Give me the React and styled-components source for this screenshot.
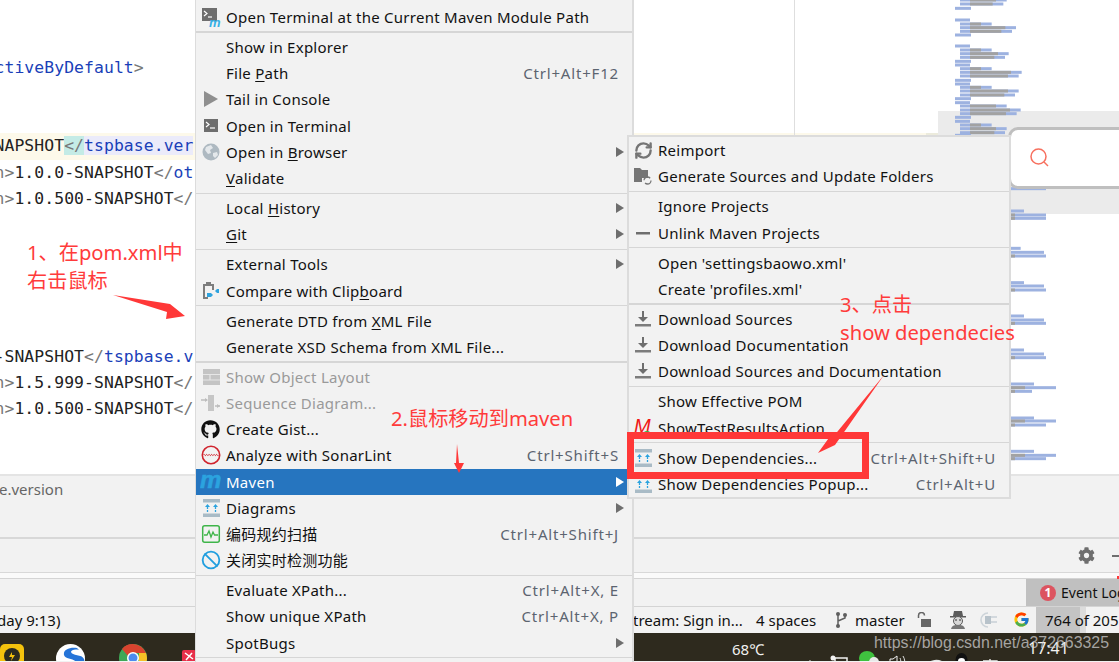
import React from 'react';
import styled, { createGlobalStyle } from 'styled-components';
import { FaGithub, FaCog } from 'react-icons/fa';
import { FcGoogle } from 'react-icons/fc';
import { Ban, RefreshCw } from 'lucide-react';

const GlobalStyle = createGlobalStyle`
  html, body { margin: 0; padding: 0; background: #fff; }
  body { font-family: "Noto Sans", "Noto Sans CJK SC", sans-serif; }
`;

const Page = styled.div`
  position: relative;
  width: 1119px;
  height: 662px;
  overflow: hidden;
  display: flex;
  flex-direction: column;
  background: #f2f2f2;
`;

/* ---------- editor ---------- */
const Editor = styled.div`
  height: 474px;
  display: flex;
  background: #fff;
  overflow: hidden;
`;

const CodeArea = styled.div`
  position: relative;
  width: 938px;
  flex: none;
  padding-top: 54.7px;
  font-family: "DejaVu Sans Mono", monospace;
  font-size: 16.4px;
  letter-spacing: 0.08px;
  color: #222;
  &::after {
    content: '';
    position: absolute;
    left: 794px;
    top: 0;
    bottom: 0;
    width: 1px;
    background: #dedede;
  }
`;

const CodeLine = styled.div`
  height: 26.28px;
  line-height: 26.28px;
  white-space: pre;
  padding-left: 0;
  text-indent: -5.5px;
  background: ${(p) => (p.$current ? '#fdf9ea' : 'transparent')};
  ${(p) => p.$current && 'border-right: 12px solid #ecebdc;'}
`;

const TagName = styled.span`
  color: #1a3fb8;
  background: ${(p) => p.$bg || 'transparent'};
`;

const Bracket = styled.span`
  color: #777;
  background: ${(p) => p.$bg || 'transparent'};
`;

const MinimapArea = styled.div`
  flex: 1;
`;

const SearchBox = styled.div`
  position: absolute;
  left: 1008px;
  top: 127px;
  width: 140px;
  height: 62px;
  box-sizing: border-box;
  background: #fff;
  border: 3px solid #bfbfbf;
  border-radius: 10px;
  display: flex;
  align-items: center;
  padding-left: 18px;
`;

const topRows = [
  [0, 600, 740], [12, 600, 730], [25, 585, 633], [60, 585, 630], [72, 600, 695], [83, 600, 768],
  [94, 600, 756], [105, 585, 633], [138, 585, 630], [150, 600, 695], [161, 600, 746], [172, 600, 735],
  [184, 585, 633], [195, 585, 630], [206, 600, 695], [217, 600, 785], [228, 600, 776], [241, 585, 633],
  [252, 585, 630], [262, 600, 695], [273, 600, 776], [285, 600, 765], [296, 585, 633], [308, 585, 630],
  [318, 600, 740], [330, 600, 782], [341, 600, 770], [352, 585, 633], [364, 585, 630], [375, 600, 695],
  [386, 600, 740], [398, 600, 735], [406, 585, 633],
];

const lowerRows = [
  [566, 858, 750], [633, 792, 750], [645, 858, 765], [655, 858, 765], [745, 782, 750], [757, 852, 750],
  [768, 858, 765], [848, 792, 750], [858, 852, 750], [870, 858, 765], [948, 792, 750], [960, 852, 750],
  [970, 858, 765], [1050, 792, 750], [1062, 852, 750], [1073, 858, 765], [1152, 822, 750], [1163, 888, 795],
  [1174, 816, 765], [1254, 822, 750], [1263, 888, 795], [1275, 858, 765], [1354, 822, 750], [1366, 888, 795],
  [1376, 858, 765],
];

// zoomed coordinates from the minimap, thirds of a pixel
function Minimap() {
  const bar = (key, y, a, b, fill) => (
    <rect key={key} x={a / 3} y={y / 3 - 1.5} width={(b - a) / 3} height={3} fill={fill} />
  );
  return (
    <svg width="181" height="474" viewBox="178 0 181 474" style={{ display: 'block' }}>
      <rect x="178" y="111" width="181" height="103" fill="#ebebeb" />
      {topRows.map(([y, a, b], i) => {
        if (b - a < 60) return bar(i, y, a, b, '#9db2e0');
        return (
          <g key={i}>
            {bar('a', y, a, b, '#9db2e0')}
            {bar('b', y, a + 30, b - 32, '#a2a2a2')}
          </g>
        );
      })}
      {lowerRows.map(([y, b, g], i) => (
        <g key={i}>
          {bar('a', y, 750, b, '#9db2e0')}
          {g > 750 && bar('b', y, 750, g, '#a2a2a2')}
        </g>
      ))}
    </svg>
  );
}

const code = [
  [<TagName key="a">ctiveByDefault</TagName>, <Bracket key="b">&gt;</Bracket>],
  null,
  null,
  'current',
  [<Bracket key="a">n&gt;</Bracket>, '1.0.0-SNAPSHOT', <Bracket key="b">&lt;/</Bracket>, <TagName key="c">ot</TagName>],
  [<Bracket key="a">n&gt;</Bracket>, '1.0.500-SNAPSHOT', <Bracket key="b">&lt;/</Bracket>],
  null, null, null, null, null,
  ['-SNAPSHOT', <Bracket key="a">&lt;/</Bracket>, <TagName key="b">tspbase.v</TagName>],
  [<Bracket key="a">n&gt;</Bracket>, '1.5.999-SNAPSHOT', <Bracket key="b">&lt;/</Bracket>],
  [<Bracket key="a">n&gt;</Bracket>, '1.0.500-SNAPSHOT', <Bracket key="b">&lt;/</Bracket>],
];

/* ---------- lower panels ---------- */
const Breadcrumb = styled.div`
  height: 65px;
  box-sizing: border-box;
  border-top: 2px solid #e4e4e4;
  border-bottom: 2px solid #d8d8d8;
  padding-top: 1px;
  font-size: 15px;
  line-height: 24px;
  color: #666;
  text-indent: -1px;
`;

const ToolRow = styled.div`
  height: 34px;
  box-sizing: border-box;
  border-bottom: 1px solid #d8d8d8;
  display: flex;
  align-items: center;
  justify-content: flex-end;
  color: #6e6e6e;
  gap: 17px;
`;

const Dash = styled.div`
  width: 7px;
  height: 2px;
  background: #6e6e6e;
`;

const GapRow = styled.div`
  height: 6px;
  box-sizing: border-box;
  background: #fafafa;
  border-bottom: 1px solid #d4d4d4;
`;

const TabRow = styled.div`
  height: 28px;
  box-sizing: border-box;
  border-bottom: 1px solid #d4d4d4;
  display: flex;
  justify-content: flex-end;
`;

const EventTab = styled.div`
  width: 93px;
  overflow: hidden;
  background: #c0c0c0;
  display: flex;
  align-items: center;
  padding-left: 14px;
  box-sizing: border-box;
  gap: 5px;
  font-size: 14px;
  white-space: nowrap;
  color: #111;
`;

const Badge = styled.span`
  width: 16px;
  height: 16px;
  flex: none;
  border-radius: 50%;
  background: #dc5460;
  color: #fff;
  font-size: 12px;
  font-weight: 700;
  line-height: 16px;
  text-align: center;
`;

const StatusBar = styled.div`
  height: 26px;
  display: flex;
  align-items: center;
  font-size: 15px;
  color: #111;
  white-space: nowrap;
  overflow: hidden;
`;

const StatusItem = styled.div`
  flex: none;
  width: ${(p) => p.$w}px;
  margin-left: ${(p) => p.$ml || 0}px;
  height: 26px;
  line-height: 25px;
  display: flex;
  align-items: center;
  box-sizing: border-box;
  padding-top: ${(p) => (p.$text ? 1 : 0)}px;
  padding-bottom: ${(p) => (p.$text ? 0 : 1)}px;
`;

const Counter = styled(StatusItem)`
  padding-left: 9px;
  background: linear-gradient(to right, #c4c4c4 44px, #dcdcdc 44px, #dcdcdc 50px, #f2f2f2 50px);
`;

const Taskbar = styled.div`
  position: relative;
  height: 28px;
  background: #2e2a1e;
  display: flex;
  align-items: flex-start;
  overflow: hidden;
  flex: none;
`;

const TaskItem = styled.div`
  flex: none;
  width: ${(p) => p.$w}px;
  margin-left: ${(p) => p.$ml || 0}px;
  margin-top: ${(p) => p.$mt || 0}px;
  color: #f1f1f1;
  font-size: ${(p) => p.$fs || 15}px;
  line-height: 20px;
  white-space: nowrap;
`;

const Watermark = styled.div`
  position: absolute;
  left: 874px;
  top: 634px;
  font-family: "Liberation Sans", sans-serif;
  font-size: 15.9px;
  line-height: 18px;
  color: rgba(214, 214, 214, 0.72);
  white-space: nowrap;
`;

const RedSpeck = styled.div`
  position: absolute;
  left: 1117px;
  top: 576px;
  width: 2px;
  height: 3px;
  background: #ff3838;
`;

/* ---------- menus ---------- */
const Menu = styled.div`
  position: absolute;
  left: ${(p) => p.$left}px;
  top: ${(p) => p.$top}px;
  width: ${(p) => p.$width}px;
  box-sizing: border-box;
  background: #f2f2f2;
  border-left: ${(p) => (p.$sub ? 2 : 1)}px solid #dcdcdc;
  border-right: 2px solid #dcdcdc;
  ${(p) => p.$sub && 'border-top: 2px solid #dcdcdc; border-bottom: 2px solid #dcdcdc;'}
  padding-top: ${(p) => (p.$sub ? 0 : 3.9)}px;
  font-size: 15px;
`;

const Row = styled.div`
  height: 26.2px;
  display: grid;
  grid-template-columns: ${(p) => p.$icon}px 1fr auto;
  align-items: center;
  padding-right: 14px;
  white-space: nowrap;
  line-height: 26px;
  letter-spacing: 0.26px;
  color: ${(p) => (p.$active ? '#fff' : p.$off ? '#9a9a9a' : '#111')};
  background: ${(p) => (p.$active ? '#2675bf' : 'transparent')};
`;

const IconCell = styled.span`
  display: flex;
  justify-content: center;
  align-items: center;
  height: 26px;
  padding-right: 1px;
`;

const Shortcut = styled.span`
  color: #5c6470;
  letter-spacing: 0.82px;
  margin-right: -1px;
`;

const Arrow = styled.span`
  width: 0;
  height: 0;
  margin-right: -6px;
  border-left: 8px solid ${(p) => (p.$active ? '#fff' : '#6e6e6e')};
  border-top: 5px solid transparent;
  border-bottom: 5px solid transparent;
`;

const Sep = styled.div`
  height: 3.9px;
  display: flex;
  align-items: center;
  &::after {
    content: '';
    flex: 1;
    height: ${(p) => (p.$thick ? 2 : 1)}px;
    background: #d6d6d6;
  }
`;

const Mn = styled.span`
  text-decoration: underline;
  text-underline-offset: 2px;
`;

/* ---------- annotations ---------- */
const Note = styled.div`
  position: absolute;
  left: ${(p) => p.$left}px;
  top: ${(p) => p.$top}px;
  font-family: "Noto Sans", "Noto Sans CJK SC", sans-serif;
  font-size: 20.2px;
  line-height: 28px;
  color: #ff3b3b;
  white-space: nowrap;
`;

const RedBox = styled.div`
  position: absolute;
  left: 627px;
  top: 432px;
  width: 242px;
  height: 47px;
  box-sizing: border-box;
  border: 7px solid #ff3838;
`;

const Overlay = styled.svg`
  position: absolute;
  left: 0;
  top: 0;
  pointer-events: none;
`;

/* ---------- icons ---------- */
const Ic = ({ children, w = 20, h = 20 }) => (
  <svg width={w} height={h} viewBox={`0 0 ${w} ${h}`}>{children}</svg>
);

const TerminalMaven = () => (
  <Ic>
    <rect x="1" y="1" width="15" height="13" fill="#6e6e6e" />
    <path d="M3 4l3 2.5L3 9" stroke="#fff" strokeWidth="1.2" fill="none" />
    <path d="M7 10h4" stroke="#fff" strokeWidth="1.2" />
    <text x="8" y="19.5" fontSize="13" fontWeight="700" fontStyle="italic" fill="#35b0e6" fontFamily="Liberation Sans">m</text>
  </Ic>
);
const Tail = () => <Ic><path d="M3 2l14 8-14 8z" fill="#8f8f8f" /></Ic>;
const Terminal = () => (
  <Ic>
    <rect x="3" y="3" width="14" height="13" fill="#6e6e6e" />
    <path d="M5 6l3 2.5L5 11" stroke="#fff" strokeWidth="1.2" fill="none" />
    <path d="M9 12h5" stroke="#fff" strokeWidth="1.2" />
  </Ic>
);
const Globe = () => (
  <Ic>
    <circle cx="10" cy="10" r="8.5" fill="#aeb9c1" />
    <path d="M5 5l5-2 2 3-3 2 1 3-3 1-3-4zM12 11l4-1 1 3-3 3-2-2z" fill="#e4e8eb" />
  </Ic>
);
const Compare = () => (
  <Ic>
    <path d="M2 3h3V1h5v2h3v6h-2V5H4v11h3v2H2z" fill="#7d7d7d" />
    <path d="M6 12h4l2 2-2 2H6zM18 8v4h-2l-2-2 2-2z" fill="#2fa3de" />
  </Ic>
);
const ObjectLayout = () => (
  <Ic>
    <rect x="2" y="2" width="17" height="16" fill="#c4c4c4" />
    <path d="M2 7.5h17M2 13h17M9 7.5V13" stroke="#e6e6e6" strokeWidth="1.2" />
  </Ic>
);
const Sequence = () => (
  <Ic>
    <rect x="7" y="2" width="6" height="16" fill="#c6c6c6" />
    <path d="M0 7h6M14 13h5" stroke="#bdbdbd" strokeWidth="1.5" />
    <path d="M7 7l-3-2v4zM19 13l-3-2v4z" fill="#bdbdbd" />
  </Ic>
);
const Sonar = () => (
  <Ic>
    <circle cx="10" cy="10" r="8.7" fill="none" stroke="#d0242e" strokeWidth="1.6" />
    <path d="M2.5 10c1-2 1.5 2 2.5 0s1.500 2 2.500 0 1.500 2 2.500 0 1.500 2 2.500 0 1.500 2 2.500 0 1.500 2 2.500 0" fill="none" stroke="#d0242e" strokeWidth="1" />
  </Ic>
);
const MavenM = () => (
  <Ic w={22}>
    <text x="0" y="16" fontSize="24" fontWeight="700" fontStyle="italic" fill="#2ba3df" stroke="#2ba3df" strokeWidth="0.6" fontFamily="Liberation Sans">m</text>
  </Ic>
);
const Diagrams = () => (
  <Ic>
    <rect x="2" y="1" width="17" height="3.500" fill="#a9bbc6" />
    <rect x="2" y="15.500" width="17" height="3.500" fill="#a9bbc6" />
    <path d="M6.500 14V8M14.500 14V8" stroke="#2ba3df" strokeWidth="1.300" strokeDasharray="2 1" />
    <path d="M6.500 6l-2.500 3h5zM14.500 6l-2.500 3h5z" fill="#2ba3df" />
  </Ic>
);
const Scan = () => (
  <Ic>
    <rect x="1.700" y="1.700" width="16.600" height="16.600" rx="2" fill="none" stroke="#3fb54a" strokeWidth="1.500" />
    <path d="M3 11h3l2-4 2 6 2-5 1.500 3H17" fill="none" stroke="#3fb54a" strokeWidth="1.300" />
  </Ic>
);
const Folder = () => (
  <Ic>
    <path d="M1 2h6l2 2h6v8H9v4H1z" fill="#757575" />
    <circle cx="14.500" cy="14.500" r="3.500" fill="none" stroke="#757575" strokeWidth="1.300" strokeDasharray="8 3" />
  </Ic>
);
const Minus = () => <Ic><rect x="3" y="9" width="14" height="2.500" fill="#6e6e6e" /></Ic>;
const Download = () => (
  <Ic>
    <path d="M10 2v8" stroke="#6e6e6e" strokeWidth="2" />
    <path d="M5 8h10l-5 5z" fill="#6e6e6e" />
    <rect x="2" y="15" width="16" height="2.500" fill="#7c7c7c" />
  </Ic>
);
const RedM = () => (
  <Ic>
    <text x="1" y="15" fontSize="20" fontStyle="italic" fill="#f01818" fontFamily="Liberation Sans">M</text>
    <circle cx="14" cy="17" r="4" fill="#2db84a" />
  </Ic>
);
const Bump = () => <Ic><circle cx="11" cy="11" r="7" fill="#8a8a8a" /></Ic>;

const mainMenu = [
  [{ icon: <TerminalMaven />, label: 'Open Terminal at the Current Maven Module Path' }],
  'thick',
  [
    { label: 'Show in Explorer' },
    { label: <>File <Mn>P</Mn>ath</>, key: 'Ctrl+Alt+F12' },
    { icon: <Tail />, label: 'Tail in Console' },
    { icon: <Terminal />, label: 'Open in Terminal' },
    { icon: <Globe />, label: <>Open in <Mn>B</Mn>rowser</>, arrow: true },
    { label: <><Mn>V</Mn>alidate</> },
  ],
  'thin',
  [
    { label: <>Local <Mn>H</Mn>istory</>, arrow: true },
    { label: <><Mn>G</Mn>it</>, arrow: true },
  ],
  'thin',
  [
    { label: 'External Tools', arrow: true },
    { icon: <Compare />, label: <>Compare with Clip<Mn>b</Mn>oard</> },
  ],
  'thin',
  [
    { label: <>Generate DTD from <Mn>X</Mn>ML File</> },
    { label: 'Generate XSD Schema from XML File...' },
  ],
  'thick',
  [
    { icon: <ObjectLayout />, label: 'Show Object Layout', off: true },
    { icon: <Sequence />, label: 'Sequence Diagram...', off: true },
    { icon: <FaGithub size={19} color="#111" />, label: 'Create Gist...' },
    { icon: <Sonar />, label: 'Analyze with SonarLint', key: 'Ctrl+Shift+S' },
    { icon: <MavenM />, label: 'Maven', arrow: true, active: true },
    { icon: <Diagrams />, label: 'Diagrams', arrow: true },
    { icon: <Scan />, label: '编码规约扫描', key: 'Ctrl+Alt+Shift+J' },
    { icon: <Ban size={20} color="#229fdf" strokeWidth={2.2} />, label: '关闭实时检测功能' },
  ],
  'thin',
  [
    { label: 'Evaluate XPath...', key: 'Ctrl+Alt+X, E' },
    { label: 'Show unique XPath', key: 'Ctrl+Alt+X, P' },
    { label: 'SpotBugs', arrow: true },
  ],
  'thin',
  [{ icon: <Bump />, label: '' }],
];

const subMenu = [
  [
    { icon: <RefreshCw size={19} color="#757575" strokeWidth={3} />, label: 'Reimport' },
    { icon: <Folder />, label: 'Generate Sources and Update Folders' },
  ],
  'thin',
  [
    { label: 'Ignore Projects' },
    { icon: <Minus />, label: 'Unlink Maven Projects' },
  ],
  'thin',
  [
    { label: "Open 'settingsbaowo.xml'" },
    { label: "Create 'profiles.xml'" },
  ],
  'thick',
  [
    { icon: <Download />, label: 'Download Sources' },
    { icon: <Download />, label: 'Download Documentation' },
    { icon: <Download />, label: 'Download Sources and Documentation' },
  ],
  'thin',
  [
    { label: 'Show Effective POM' },
    { icon: <RedM />, label: 'ShowTestResultsAction' },
  ],
  'thin',
  [
    { icon: <Diagrams />, label: 'Show Dependencies...', key: 'Ctrl+Alt+Shift+U' },
    { icon: <Diagrams />, label: 'Show Dependencies Popup...', key: 'Ctrl+Alt+U' },
  ],
];

function MenuItems({ groups, iconWidth }) {
  return groups.map((group, i) =>
    typeof group === 'string' ? (
      <Sep key={i} $thick={group === 'thick'} />
    ) : (
      group.map((item, j) => (
        <Row key={`${i}-${j}`} $icon={iconWidth} $active={item.active} $off={item.off}>
          <IconCell>{item.icon}</IconCell>
          <span>{item.label}</span>
          {item.key && <Shortcut>{item.key}</Shortcut>}
          {item.arrow && <Arrow $active={item.active} />}
        </Row>
      ))
    )
  );
}

export default function App() {
  return (
    <Page>
      <GlobalStyle />
      <Editor>
        <CodeArea>
          {code.map((line, i) =>
            line === 'current' ? (
              <CodeLine key={i} $current>
                NAPSHOT<Bracket $bg="#c4ebe6">&lt;/</Bracket>
                <TagName $bg="#ebebfa">tspbase.ver</TagName>
              </CodeLine>
            ) : (
              <CodeLine key={i}>{line}</CodeLine>
            )
          )}
        </CodeArea>
        <MinimapArea>
          <Minimap />
        </MinimapArea>
      </Editor>

      <Breadcrumb>e.version</Breadcrumb>
      <ToolRow>
        <FaCog size={17} />
        <Dash />
      </ToolRow>
      <GapRow />
      <TabRow>
        <EventTab>
          <Badge>1</Badge>
          Event Log
        </EventTab>
      </TabRow>
      <StatusBar>
        <StatusItem $w={633} $ml={-3} $text>day 9:13)</StatusItem>
        <StatusItem $w={110} $ml={3} $text>tream: Sign in...</StatusItem>
        <StatusItem $w={70} $ml={13} $text>4 spaces</StatusItem>
        <StatusItem $w={13} $ml={9}>
          <svg width="13" height="18" viewBox="0 0 13 18">
            <circle cx="3" cy="3" r="2" fill="#5f5f5f" />
            <circle cx="3" cy="15" r="2" fill="#5f5f5f" />
            <circle cx="10" cy="4" r="2" fill="#5f5f5f" />
            <path d="M3 3v12M10 4v3L3 10" stroke="#5f5f5f" strokeWidth="1.500" fill="none" />
          </svg>
        </StatusItem>
        <StatusItem $w={52} $ml={7} $text>master</StatusItem>
        <StatusItem $w={15} $ml={10}>
          <svg width="15" height="16" viewBox="0 0 15 16">
            <path d="M1.500 6V3.500a3 3 0 0 1 6 0" fill="none" stroke="#666" strokeWidth="1.500" />
            <rect x="4" y="7" width="10" height="8" fill="#666" />
          </svg>
        </StatusItem>
        <StatusItem $w={20} $ml={16}>
          <svg width="20" height="20" viewBox="0 0 20 20">
            <path d="M6 1h8l1 5H5z" fill="#5c5c5c" />
            <rect x="2" y="6" width="16" height="1.500" fill="#5c5c5c" />
            <circle cx="10" cy="11" r="4.500" fill="#d8d8d8" stroke="#5c5c5c" />
            <path d="M7 10h2M11 10h2" stroke="#333" />
            <path d="M3 19c1-4 4-4 7-4s6 0 7 4z" fill="#777" />
          </svg>
        </StatusItem>
        <StatusItem $w={18} $ml={12}>
          <svg width="18" height="18" viewBox="0 0 18 18">
            <path d="M8 2a7 7 0 0 0 0 14" fill="none" stroke="#cdd4d9" strokeWidth="1.600" />
            <path d="M5 5h6v8H5z" fill="#b7c2ca" />
            <path d="M11 6h6M11 11h6" stroke="#c7d0d6" strokeWidth="1.600" />
          </svg>
        </StatusItem>
        <StatusItem $w={17} $ml={15}><FcGoogle size={17} /></StatusItem>
        <Counter $w={83} $ml={6} $text>764 of 205</Counter>
      </StatusBar>
      <Taskbar>
        <TaskItem $w={24} $mt={11}>
          <svg width="24" height="24" viewBox="0 0 24 24">
            <rect width="24" height="24" rx="5" fill="#f4c20d" />
            <circle cx="12" cy="12" r="8" fill="#2b2b20" />
            <path d="M12 8l-3 5h3l-1 4 4-6h-3z" fill="#f4c20d" />
          </svg>
        </TaskItem>
        <TaskItem $w={29} $ml={32} $mt={11}>
          <svg width="29" height="29" viewBox="0 0 29 29">
            <circle cx="14.500" cy="14.500" r="14.500" fill="#fff" />
            <path d="M21 4C13 3 7 6 8 11c1 5 12 3 12 8 0 3-5 5-10 4l-2 4a14 14 0 0 0 15 0c4-3 6-8 5-12-2-5-12-3-13-7 0-2 4-3 8-2z" fill="#2574d8" />
          </svg>
        </TaskItem>
        <TaskItem $w={28} $ml={34} $mt={11}>
          <svg width="28" height="28" viewBox="0 0 28 28">
            <circle cx="14" cy="14" r="14" fill="#3fa757" />
            <path d="M14 0a14 14 0 0 1 13 9H14a5 5 0 0 0-5 3L3 5a14 14 0 0 1 11-5z" fill="#d9432f" />
            <path d="M27 9a14 14 0 0 1 1 5c0 8-6 14-14 14l6-10V9z" fill="#f6c026" />
            <circle cx="14" cy="14" r="6" fill="#fff" />
            <circle cx="14" cy="14" r="4.500" fill="#4c8bf0" />
          </svg>
        </TaskItem>
        <TaskItem $w={14} $ml={35} $mt={15}>
          <svg width="14" height="14" viewBox="0 0 14 14">
            <rect width="14" height="14" rx="2" fill="#e8304a" />
            <path d="M3 3l8 6M10 3L4 10" stroke="#fff" strokeWidth="1.500" />
          </svg>
        </TaskItem>
        <TaskItem $w={33} $ml={536} $mt={6}>68℃</TaskItem>
        <TaskItem $w={16} $ml={37} $mt={20}>
          <svg width="16" height="10" viewBox="0 0 16 10">
            <path d="M1 9l7-7 7 7" fill="none" stroke="#f1f1f1" strokeWidth="1.300" />
          </svg>
        </TaskItem>
        <TaskItem $w={18} $ml={12} $mt={18}>
          <svg width="18" height="12" viewBox="0 0 18 12">
            <circle cx="3" cy="3" r="2.500" fill="#f1f1f1" />
            <rect x="5" y="3" width="12" height="9" fill="none" stroke="#f1f1f1" strokeWidth="1.500" />
          </svg>
        </TaskItem>
        <TaskItem $w={20} $ml={11} $mt={16}>
          <svg width="20" height="14" viewBox="0 0 20 14">
            <ellipse cx="8" cy="7" rx="8" ry="7" fill="#3fc13f" />
            <ellipse cx="15" cy="11" rx="5" ry="5" fill="#e8e8e8" />
          </svg>
        </TaskItem>
        <TaskItem $w={17} $ml={10} $mt={18}>
          <svg width="17" height="12" viewBox="0 0 17 12">
            <path d="M1 4h3l4-3v11H1z" fill="none" stroke="#f1f1f1" />
            <path d="M11 3c1 2 1 5 1 9M14 1c2 3 2 7 2 11" fill="none" stroke="#ddd" />
          </svg>
        </TaskItem>
        <TaskItem $w={24} $ml={16} $mt={20}>
          <svg width="24" height="10" viewBox="0 0 24 10">
            <path d="M2 10a13 13 0 0 1 20-6M7 10a8 8 0 0 1 11-3M12 10a3 3 0 0 1 4-1" fill="none" stroke="#e6e6e6" strokeWidth="1.200" />
          </svg>
        </TaskItem>
        <TaskItem $w={19} $ml={6} $mt={17}>
          <svg width="19" height="13" viewBox="0 0 19 13">
            <ellipse cx="9.500" cy="7" rx="6" ry="7" fill="#111" />
            <ellipse cx="9.500" cy="8" rx="3.500" ry="3" fill="#fff" />
            <path d="M4 8h11v3H4z" fill="#e32626" />
          </svg>
        </TaskItem>
        <TaskItem $w={16} $ml={11} $mt={19}>
          <svg width="16" height="9" viewBox="0 0 16 9">
            <path d="M1 2h14v7M1 2v7M8 0v9" fill="none" stroke="#f1f1f1" strokeWidth="1.300" />
          </svg>
        </TaskItem>
        <TaskItem $w={38} $ml={30} $mt={5} $fs={16}>17:41</TaskItem>
        <TaskItem $w={7} $ml={46} $mt={20}>
          <svg width="7" height="8" viewBox="0 0 7 8">
            <path d="M0.500 8V0.500H7" fill="none" stroke="#f1f1f1" />
          </svg>
        </TaskItem>
      </Taskbar>

      <SearchBox>
        <svg width="22" height="22" viewBox="0 0 22 22">
          <circle cx="9.500" cy="9.500" r="7.500" fill="none" stroke="#f7705f" strokeWidth="1.500" />
          <path d="M15 15l4 4" stroke="#f7705f" strokeWidth="1.500" />
        </svg>
      </SearchBox>

      <Menu $left={195} $top={0} $width={439}>
        <MenuItems groups={mainMenu} iconWidth={30} />
      </Menu>
      <Menu $sub $left={627} $top={135} $width={384}>
        <MenuItems groups={subMenu} iconWidth={29} />
      </Menu>

      <Note $left={27} $top={238}>1、在pom.xml中</Note>
      <Note $left={27} $top={266}>右击鼠标</Note>
      <Note $left={391} $top={404}>2.鼠标移动到maven</Note>
      <Note $left={840} $top={290}>3、点击</Note>
      <Note $left={840} $top={318}>show dependecies</Note>
      <RedBox />
      <Overlay width="1119" height="662">
        <path d="M113 295L170 304L170 304L185 316L166 319L167 312z" fill="#ff3838" />
        <path d="M457 444L459 463L464 463L459 473L454 463L456 463z" fill="#ff3838" />
        <path d="M884 375L835 445L818 453L831 435L833 437z" fill="#ff3838" />
      </Overlay>
      <Watermark>https://blog.csdn.net/a372663325</Watermark>
      <RedSpeck />
    </Page>
  );
}
